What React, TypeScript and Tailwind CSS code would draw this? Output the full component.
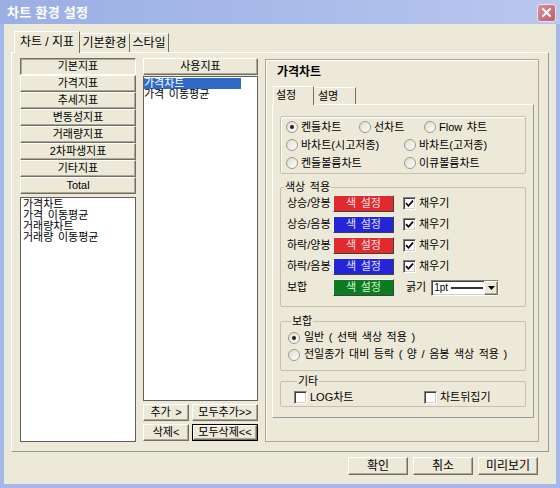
import React from 'react';

// classic 3D borders
const raised =
  'border border-t-white border-l-white border-r-[#716f64] border-b-[#716f64] shadow-[inset_-1px_-1px_0_#aca899]';
const pressed =
  'border border-t-[#716f64] border-l-[#716f64] border-r-white border-b-white shadow-[inset_1px_1px_0_#aca899]';
const sunken =
  'border border-t-[#808080] border-l-[#808080] border-r-white border-b-white shadow-[inset_1px_1px_0_#404040,inset_-1px_-1px_0_#d4d0c8]';

const categories = ['기본지표', '가격지표', '추세지표', '변동성지표', '거래량지표', '2차파생지표', '기타지표', 'Total'];
const allItems = ['가격차트', '가격 이동평균', '거래량차트', '거래량 이동평균'];

export default function App() {
  return (
    <div className="w-[560px] h-[488px] bg-[#a6b8e9] flex flex-col font-['Liberation_Sans','Noto_Sans_CJK_KR',sans-serif] text-[11px] [word-spacing:1.5px] text-black select-none overflow-hidden">
      {/* 타이틀바 */}
      <div className="h-[24px] shrink-0 flex items-center justify-between pl-[7px] pr-[4px] bg-gradient-to-r from-[#9aafe3] via-[#a8baea] to-[#bac8ef]">
        <span className="text-[13px] font-bold text-white leading-none tracking-[0.3px] [word-spacing:0px]">차트 환경 설정</span>
        <div className="w-[19px] h-[18px] mt-[1px] rounded-[3px] border border-[#f2dfe2] bg-gradient-to-br from-[#d9909a] to-[#b8606f] flex items-center justify-center">
          <svg width="11" height="11" viewBox="0 0 11 11">
            <path d="M2 2 L9 9 M9 2 L2 9" stroke="#fff" strokeWidth="2" strokeLinecap="round" />
          </svg>
        </div>
      </div>

      {/* 본문 */}
      <div className="flex-1 mx-[4px] mb-[4px] bg-[#ece9d8] flex flex-col">
        {/* 탭 */}
        <div className="mt-[7px] ml-[10px] h-[21px] flex items-end relative z-10 text-[12px] [word-spacing:0px]">
          <div className="h-[22px] -mb-[1px] w-[66px] bg-[#ece9d8] border-t border-l border-white border-r border-r-[#716f64] flex items-center justify-center pb-[2px]">
            차트 / 지표
          </div>
          <div className="h-[19px] w-[50px] border-t border-t-white border-r border-r-[#716f64] flex items-center justify-center">
            기본환경
          </div>
          <div className="h-[19px] w-[39px] border-t border-t-white border-r border-r-[#716f64] flex items-center justify-center">
            스타일
          </div>
        </div>

        {/* 탭 패널 */}
        <div className="mx-[7px] h-[400px] border border-t-white border-l-white border-r-[#919b9c] border-b-[#919b9c] flex pl-[8px] pt-[5px]">
          {/* 지표 분류 */}
          <div className="w-[116px] flex flex-col">
            {categories.map((c, i) => (
              <div key={c} className={`h-[17px] flex items-center justify-center bg-[#ece9d8] ${i === 0 ? pressed : raised}`}>
                {c}
              </div>
            ))}
            <div className="mt-[3px] h-[245px] bg-white border border-[#5f5f5f] pl-[2px] pt-[1px]">
              {allItems.map((t) => (
                <div key={t} className="leading-[11px] h-[11px] whitespace-nowrap">{t}</div>
              ))}
            </div>
          </div>

          {/* 사용지표 */}
          <div className="w-[115px] ml-[7px] flex flex-col">
            <div className={`h-[17px] flex items-center justify-center bg-[#ece9d8] ${raised}`}>사용지표</div>
            <div className="mt-[1px] h-[325px] bg-white border border-[#5f5f5f] pt-[1px]">
              <div className="w-[97px] h-[11px] leading-[11px] bg-[#316ac5] text-white">가격차트</div>
              <div className="h-[11px] leading-[11px] whitespace-nowrap">가격 이동평균</div>
            </div>
            <div className="mt-[3px] flex gap-[3px]">
              <div className={`w-[46px] h-[17px] flex items-center justify-center ${raised}`}>추가 &gt;</div>
              <div className={`flex-1 h-[17px] flex items-center justify-center ${raised}`}>모두추가&gt;&gt;</div>
            </div>
            <div className="mt-[3px] flex gap-[3px]">
              <div className={`w-[46px] h-[17px] flex items-center justify-center ${raised}`}>삭제&lt;</div>
              <div className="flex-1 h-[17px] border border-black">
                <div className={`h-full flex items-center justify-center ${raised}`}>모두삭제&lt;&lt;</div>
              </div>
            </div>
          </div>

          {/* 가격차트 설정 */}
          <div className="ml-[7px] mt-[1px] w-[274px] h-[383px] border border-[#aca899] shadow-[inset_1px_1px_0_#fff] flex flex-col">
            <div className="ml-[11px] mt-[4px] h-[16px] leading-[16px] text-[12px] font-bold">가격차트</div>

            <div className="ml-[7px] mt-[6px] h-[18px] flex items-end relative z-10">
              <div className="h-[19px] -mb-[1px] w-[41px] bg-[#ece9d8] border-t border-l border-white border-r border-r-[#716f64] flex items-center pl-[2px] pb-[1px]">
                설정
              </div>
              <div className="h-[17px] w-[42px] border-t border-t-white border-r border-r-[#716f64] flex items-center pl-[4px]">
                설명
              </div>
            </div>

            <div className="ml-[6px] w-[262px] h-[314px] border border-t-white border-l-white border-r-[#919b9c] border-b-[#919b9c] flex flex-col">
              {/* 차트 종류 */}
              <div className="mt-[11px] ml-[7px] w-[246px] h-[58px] border border-[#c4c1b0] rounded-[2px] shadow-[inset_1px_1px_0_#fff] pt-[1px] pl-[5px]">
                <div className="h-[18px] flex items-center">
                  <RadioItem on label="켄들차트" className="w-[73px]" />
                  <RadioItem label="선차트" className="w-[65px]" />
                  <RadioItem label="Flow 챠트" />
                </div>
                <div className="h-[18px] flex items-center">
                  <RadioItem label="바차트(시고저종)" className="w-[118px]" />
                  <RadioItem label="바차트(고저종)" />
                </div>
                <div className="h-[18px] flex items-center">
                  <RadioItem label="켄들볼륨차트" className="w-[118px]" />
                  <RadioItem label="이큐볼륨차트" />
                </div>
              </div>

              {/* 색상 적용 */}
              <fieldset className="mt-[7px] ml-[7px] w-[246px] border border-[#c4c1b0] rounded-[2px] pb-[8px]">
                <legend className="ml-[3px] px-[1px] leading-[12px] h-[12px]">색상 적용</legend>
                <ColorRow label="상승/양봉" bg="bg-[#e02a2e] text-[#ffe2e2]" />
                <ColorRow label="상승/음봉" bg="bg-[#2525d8] text-[#e0e0ff]" />
                <ColorRow label="하락/양봉" bg="bg-[#e02a2e] text-[#ffe2e2]" />
                <ColorRow label="하락/음봉" bg="bg-[#2525d8] text-[#e0e0ff]" />
                <div className="h-[21px] flex items-center pl-[6px]">
                  <span className="w-[46px]">보합</span>
                  <ColorBtn bg="bg-[#0b7c1f] text-[#d8f4d8]" />
                  <span className="ml-[12px]">굵기</span>
                  <div className={`ml-[5px] w-[68px] h-[16px] bg-white flex items-center ${sunken}`}>
                    <span className="text-[10px] leading-[12px] ml-[2px]">1pt</span>
                    <span className="ml-[3px] w-[32px] h-[2px] bg-[#333]" />
                    <span className={`ml-auto w-[14px] h-[14px] bg-[#ece9d8] flex items-center justify-center ${raised}`}>
                      <svg width="7" height="4" viewBox="0 0 7 4">
                        <path d="M0 0 H7 L3.5 4 Z" fill="#000" />
                      </svg>
                    </span>
                  </div>
                </div>
              </fieldset>

              {/* 보합 */}
              <fieldset className="mt-[8px] ml-[7px] w-[246px] border border-[#c4c1b0] rounded-[2px] pt-[2px] pb-[7px] pl-[7px]">
                <legend className="ml-[3px] px-[1px] leading-[12px] h-[12px]">보합</legend>
                <div className="h-[17px] flex items-center">
                  <RadioItem on label="일반 ( 선택 색상 적용 )" gap="ml-[4px]" />
                </div>
                <div className="h-[17px] flex items-center">
                  <RadioItem label="전일종가 대비 등락 ( 양 / 음봉 색상 적용 )" gap="ml-[4px]" />
                </div>
              </fieldset>

              {/* 기타 */}
              <fieldset className="mt-[4px] ml-[7px] w-[246px] border border-[#c4c1b0] rounded-[2px] pt-[2px] pb-[1px] pl-[13px]">
                <legend className="ml-[3px] px-[1px] leading-[12px] h-[12px]">기타</legend>
                <div className="h-[16px] flex items-center">
                  <div className="w-[130px] flex items-center">
                    <Check />
                    <span className="ml-[3px]">LOG차트</span>
                  </div>
                  <div className="flex items-center">
                    <Check />
                    <span className="ml-[3px]">차트뒤집기</span>
                  </div>
                </div>
              </fieldset>
            </div>
          </div>
        </div>

        {/* 하단 버튼 */}
        <div className="mt-[5px] flex justify-end gap-[5px] pr-[18px] text-[12px]">
          <div className={`w-[60px] h-[18px] flex items-center justify-center ${raised}`}>확인</div>
          <div className={`w-[60px] h-[18px] flex items-center justify-center ${raised}`}>취소</div>
          <div className={`w-[60px] h-[18px] flex items-center justify-center ${raised}`}>미리보기</div>
        </div>
      </div>
    </div>
  );
}

function RadioItem({ label, on, className = '', gap = 'ml-[3px]' }: { label: string; on?: boolean; className?: string; gap?: string }) {
  return (
    <div className={`flex items-center whitespace-nowrap ${className}`}>
      <span className="w-[12px] h-[12px] rounded-full bg-gradient-to-br from-[#dddbd0] to-white border border-[#9a988a] flex items-center justify-center shrink-0">
        {on && <span className="w-[4px] h-[4px] rounded-full bg-[#1e1e1e]" />}
      </span>
      <span className={gap}>{label}</span>
    </div>
  );
}

function Check({ checked }: { checked?: boolean }) {
  return (
    <span className={`w-[13px] h-[13px] bg-white flex items-center justify-center shrink-0 ${sunken}`}>
      {checked && (
        <svg width="9" height="9" viewBox="0 0 9 9">
          <path d="M1 4.2 L3.5 6.8 L8 1.6" stroke="#000" strokeWidth="1.7" fill="none" />
        </svg>
      )}
    </span>
  );
}

function ColorBtn({ bg }: { bg: string }) {
  return (
    <div className={`w-[61px] h-[17px] flex items-center justify-center border border-t-[#f4f4f4] border-l-[#f4f4f4] border-r-[#404040] border-b-[#404040] ${bg}`}>
      색 설정
    </div>
  );
}

function ColorRow({ label, bg }: { label: string; bg: string }) {
  return (
    <div className="h-[21px] flex items-center pl-[6px]">
      <span className="w-[46px] whitespace-nowrap">{label}</span>
      <ColorBtn bg={bg} />
      <span className="ml-[9px]">
        <Check checked />
      </span>
      <span className="ml-[3px]">채우기</span>
    </div>
  );
}
